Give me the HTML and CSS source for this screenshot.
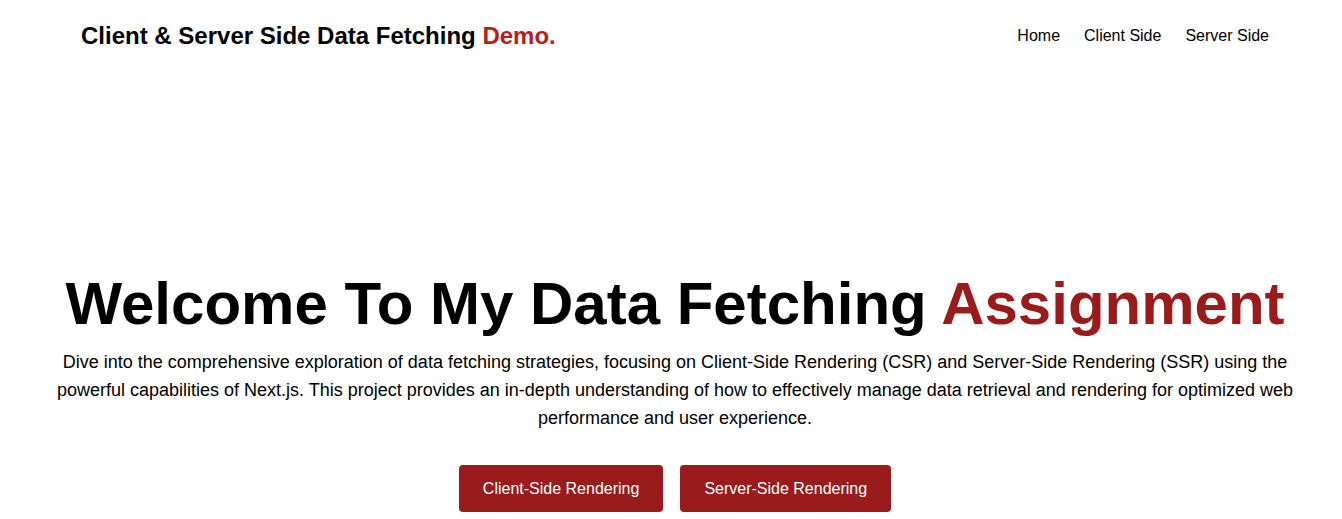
FILE: index.html
```html
<!DOCTYPE html>
<html lang="en">
<head>
<meta charset="utf-8">
<title>Data Fetching Demo</title>
<link rel="stylesheet" href="styles.css">
</head>
<body>
<header class="site-header">
  <div class="brand">Client &amp; Server Side Data Fetching <span class="accent">Demo.</span></div>
  <nav class="nav">
    <a href="#">Home</a>
    <a href="#">Client Side</a>
    <a href="#">Server Side</a>
  </nav>
</header>
<main class="hero">
  <h1 class="hero-title">Welcome To My Data Fetching <span class="accent-dark">Assignment</span></h1>
  <p class="hero-text">Dive into the comprehensive exploration of data fetching strategies, focusing on Client-Side Rendering (CSR) and Server-Side Rendering (SSR) using the powerful capabilities of Next.js. This project provides an in-depth understanding of how to effectively manage data retrieval and rendering for optimized web performance and user experience.</p>
  <div class="actions">
    <a class="btn" href="#">Client-Side Rendering</a>
    <a class="btn" href="#">Server-Side Rendering</a>
  </div>
</main>
</body>
</html>
```
FILE: styles.css
```css
* { box-sizing: border-box; }
html, body { margin: 0; padding: 0; }
body {
  font-family: "Liberation Sans", Arial, sans-serif;
  color: #000;
  background: #fff;
}
.site-header {
  display: flex;
  justify-content: space-between;
  align-items: center;
  padding: 20px 73px 0 81px;
  height: 52px;
}
.brand {
  font-size: 24px;
  font-weight: 700;
  line-height: 32px;
}
.accent { color: #b91c1c; }
.accent-dark { color: #991b1b; }
.nav {
  display: flex;
  gap: 24px;
  font-size: 16px;
  line-height: 24px;
}
.nav a { color: #000; text-decoration: none; }
.hero {
  display: flex;
  flex-direction: column;
  align-items: center;
  padding: 222px 36px 0 44px;
  text-align: center;
}
.hero-title {
  margin: 0;
  font-size: 60px;
  line-height: 60px;
  font-weight: 700;
  white-space: nowrap;
}
.hero-text {
  margin: 14px 0 0;
  font-size: 18px;
  line-height: 28px;
  max-width: 1250px;
}
.actions {
  display: flex;
  gap: 17px;
  margin-top: 33px;
}
.btn {
  display: inline-block;
  background: #991b1b;
  color: #fff;
  text-decoration: none;
  font-size: 16px;
  line-height: 23px;
  padding: 12px 24px;
  border-radius: 4px;
}
```
